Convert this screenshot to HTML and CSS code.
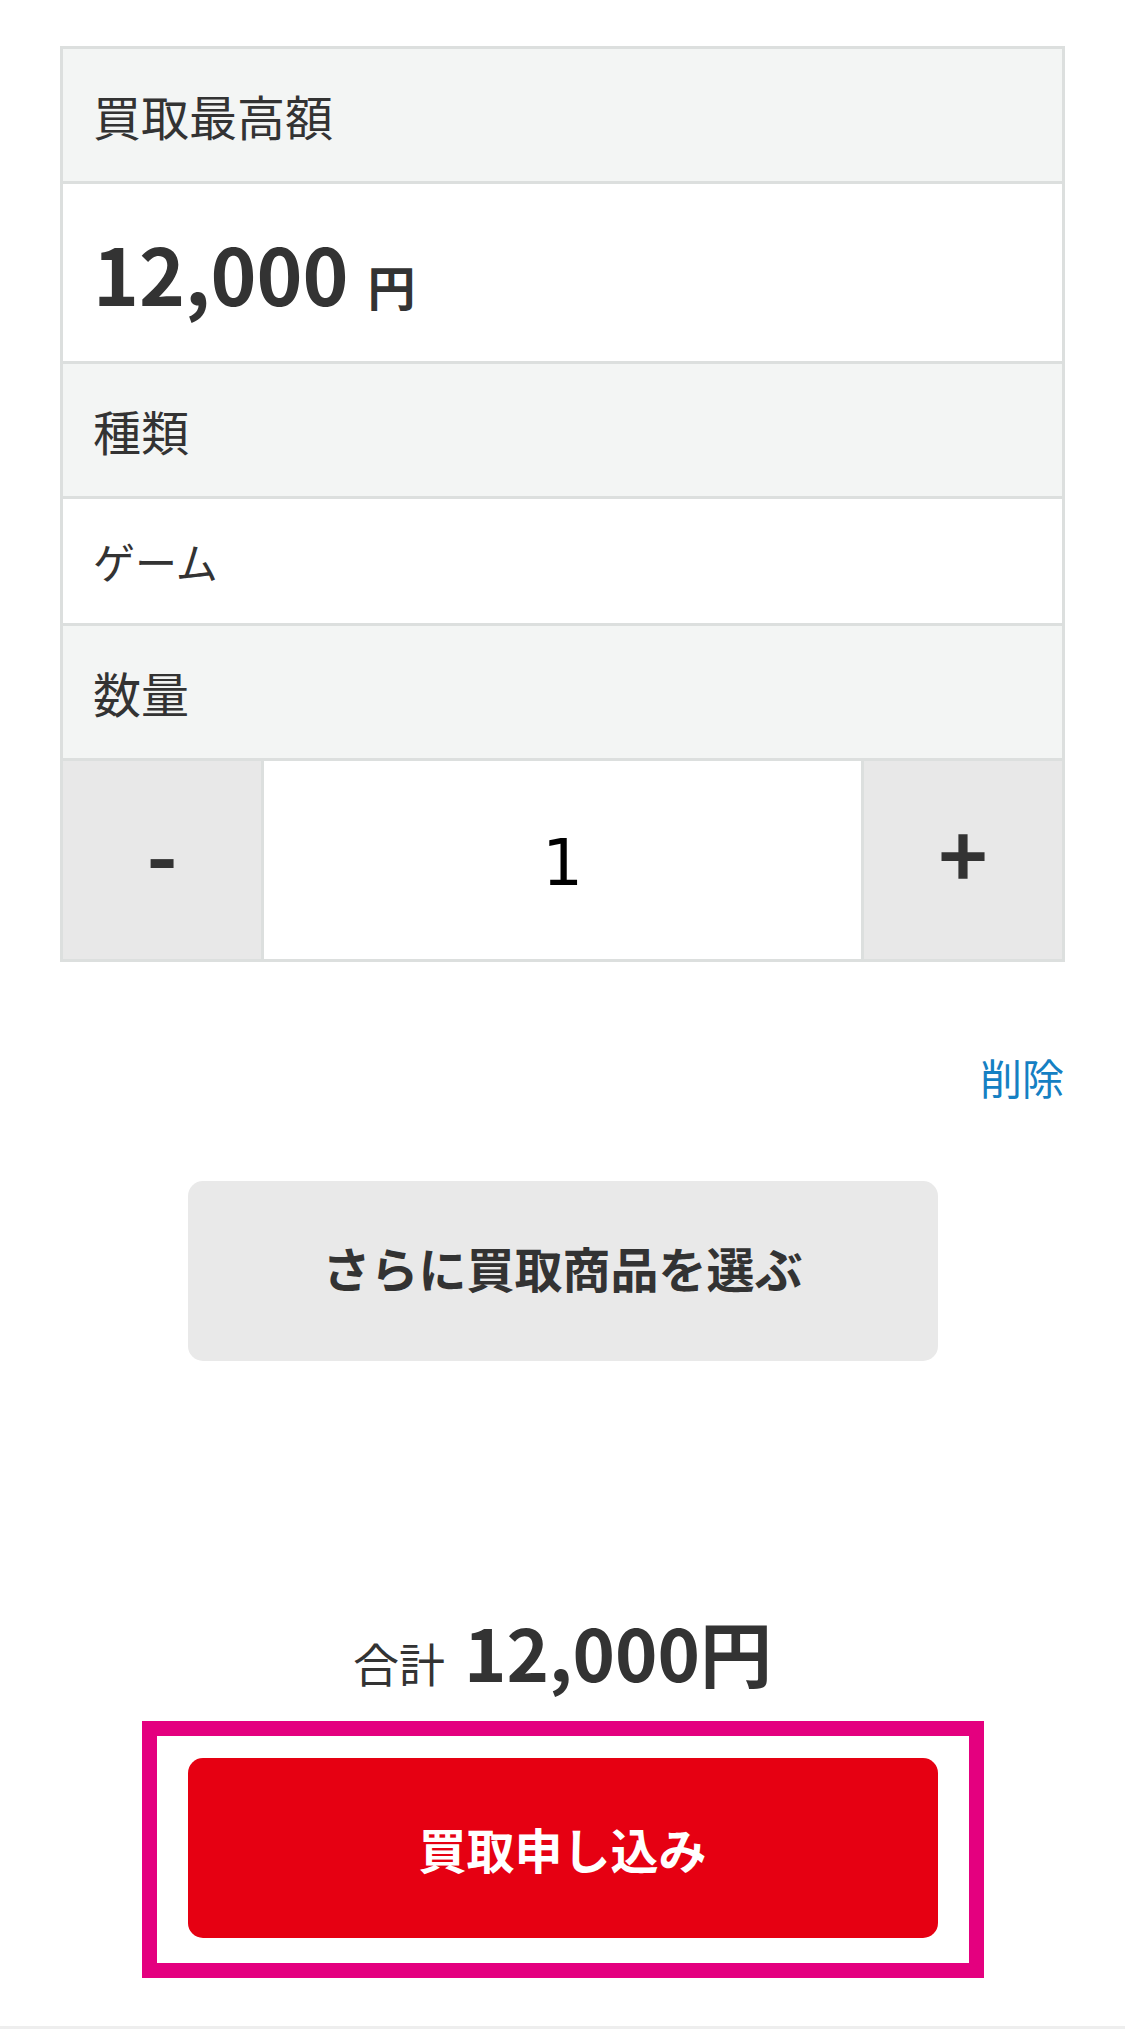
FILE: index.html
```html
<!DOCTYPE html>
<html lang="ja">
<head>
<meta charset="utf-8">
<link rel="stylesheet" href="styles.css">
</head>
<body>
<div class="page">
  <div class="spec">
    <div class="row th">買取最高額</div>
    <div class="row price">12,000<span class="yen">円</span></div>
    <div class="row th">種類</div>
    <div class="row td">ゲーム</div>
    <div class="row th">数量</div>
    <div class="qty">
      <div class="qbtn minus">-</div>
      <div class="qval">1</div>
      <div class="qbtn plus">+</div>
    </div>
  </div>
  <div class="del-row"><a class="del">削除</a></div>
  <div class="more">さらに買取商品を選ぶ</div>
  <div class="total"><span class="total-label">合計</span><span class="total-num">12,000円</span></div>
  <div class="highlight">
    <div class="apply">買取申し込み</div>
  </div>
</div>
<div class="footer-line"></div>
</body>
</html>
```
FILE: styles.css
```css
html, body {
  margin: 0;
  padding: 0;
  background: #fff;
}
body {
  font-family: "Noto Sans CJK JP", "Noto Sans", sans-serif;
  color: #333;
  width: 1125px;
}
.page {
  padding: 46px 60px 0;
}
.spec {
  border: 3px solid #dcdfde;
}
.row {
  border-bottom: 3px solid #dcdfde;
  padding: 30px;
}
.th {
  background: #f3f5f4;
  font-size: 48px;
  line-height: 72px;
}
.price {
  background: #fff;
  font-size: 78px;
  font-weight: 700;
  line-height: 117px;
}
.yen {
  font-size: 48px;
  line-height: 48px;
  margin-left: 19px;
}
.td {
  background: #fff;
  font-size: 42px;
  line-height: 64px;
}
.qty {
  display: flex;
  height: 198px;
}
.qbtn {
  box-sizing: border-box;
  width: 201px;
  padding-bottom: 18px;
  background: #e8e8e8;
  display: flex;
  align-items: center;
  justify-content: center;
  font-weight: 700;
  font-size: 84px;
  color: #333;
}
.minus {
  border-right: 3px solid #dcdfde;
}
.plus {
  border-left: 3px solid #dcdfde;
}
.qval {
  flex: 1;
  display: flex;
  align-items: center;
  justify-content: center;
  padding-top: 6px;
  font-family: "DejaVu Sans", sans-serif;
  font-size: 64px;
  color: #000;
  background: #fff;
}
.del-row {
  display: flex;
  justify-content: flex-end;
  margin-top: 84px;
}
.del {
  color: #1580c3;
  font-size: 42px;
  line-height: normal;
  margin-right: 1px;
}
.more {
  box-sizing: border-box;
  width: 750px;
  height: 180px;
  margin: 74px auto 0;
  padding-bottom: 8px;
  background: #e9e9e9;
  border-radius: 15px;
  display: flex;
  align-items: center;
  justify-content: center;
  font-size: 48px;
  font-weight: 700;
  color: #333;
}
.total {
  margin-top: 237px;
  text-align: center;
  line-height: normal;
  white-space: nowrap;
}
.total-label {
  font-size: 46px;
  margin-right: 19px;
}
.total-num {
  font-size: 72px;
  font-weight: 700;
}
.highlight {
  box-sizing: border-box;
  width: 842px;
  margin: 18px auto 0;
  border: 15px solid #e4007f;
  padding: 22px 31px 25px;
}
.apply {
  height: 180px;
  background: #e60012;
  border-radius: 15px;
  display: flex;
  align-items: center;
  justify-content: center;
  color: #fff;
  font-size: 48px;
  font-weight: 700;
}
.footer-line {
  margin-top: 48px;
  border-top: 3px solid #eeeeee;
}
```
